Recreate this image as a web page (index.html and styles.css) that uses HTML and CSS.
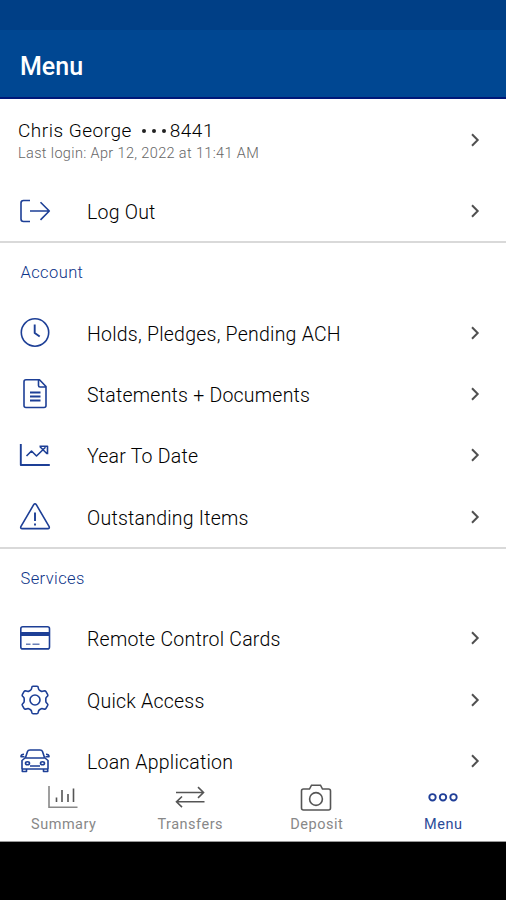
FILE: index.html
```
<!DOCTYPE html>
<html lang="en">
<head>
<meta charset="utf-8">
<title>Menu</title>
<link rel="stylesheet" href="styles.css">
</head>
<body>
<svg class="defs" width="0" height="0"><defs><symbol id="chev" viewBox="0 0 12 16"><path d="M2 2.300 7.700 8 2 13.700"/></symbol></defs></svg>
<div class="screen">
  <div class="status"></div>
  <header class="appbar"><h1>Menu</h1></header>
  <main class="content">
    <div class="profile">
      <div class="who">
        <div class="name"><span>Chris George</span><i class="dots"><b></b><b></b><b></b></i><span>8441</span></div>
        <div class="login"><span>Last login: Apr 12, 2022 at 11:41 AM</span></div>
      </div>
      <svg class="chev"><use href="#chev"/></svg>
    </div>
    <div class="row">
      <svg class="icon" viewBox="0 0 34 34"><path d="M12 6.500H5.500Q3 6.500 3 9V25Q3 27.500 5.500 27.500H12"/><path d="M12 17H31M22.500 8.200 31.300 17 22.500 25.900"/></svg>
      <span class="label">Log Out</span><svg class="chev"><use href="#chev"/></svg>
    </div>
    <section>
      <h2>Account</h2>
      <div class="row">
        <svg class="icon" viewBox="0 0 34 34"><circle cx="17" cy="16.500" r="13.700"/><path class="bold" d="M16.700 8.500V17l5 3.500"/></svg>
        <span class="label">Holds, Pledges, Pending ACH</span><svg class="chev"><use href="#chev"/></svg>
      </div>
      <div class="row">
        <svg class="icon" viewBox="0 0 34 34"><path d="M8 2.700H21.500L28 9.500V28.500Q28 30.500 26 30.500H8Q6 30.500 6 28.500V4.700Q6 2.700 8 2.700ZM20.500 3V8.500Q20.500 10 22 10H27.700"/><path class="bold" d="M12 15.500H22.500M12 19.500H22.500M12 23.500H22.500"/></svg>
        <span class="label">Statements + Documents</span><svg class="chev"><use href="#chev"/></svg>
      </div>
      <div class="row">
        <svg class="icon" viewBox="0 0 34 34"><path class="bold" d="M2.800 6V27H31.800"/><path d="M8.500 18 13.500 13 18.500 18 27.500 9.200M21.500 8.300H29.500V16.200M22 8.800 29 15.800"/></svg>
        <span class="label">Year To Date</span><svg class="chev"><use href="#chev"/></svg>
      </div>
      <div class="row">
        <svg class="icon" viewBox="0 0 34 34"><path d="M15.700 4.700Q17 2.700 18.300 4.700L31 26.300Q32 28.600 29.700 28.600H4.300Q2 28.600 3 26.300Z"/><path class="bold" d="M17 12.500V21M17 23.500V25.500"/></svg>
        <span class="label">Outstanding Items</span><svg class="chev"><use href="#chev"/></svg>
      </div>
    </section>
    <section>
      <h2>Services</h2>
      <div class="row">
        <svg class="icon" viewBox="0 0 34 34"><rect x="2.800" y="5.700" width="28.700" height="22.200" rx="2"/><path class="stripe" d="M3 13H31.500"/><path class="fine" d="M8 23.300H12.500M14.500 23.300H21.500"/></svg>
        <span class="label">Remote Control Cards</span><svg class="chev"><use href="#chev"/></svg>
      </div>
      <div class="row">
        <svg class="icon" viewBox="-17 -17 34 34"><path d="M-2-13.700H2Q3.200-13.700 3.300-12 3.500-10.300 4.500-9.700L6.200-8.800Q7-8.300 8.700-9 10.300-9.500 11-8.300L12.700-5.400Q13.300-4.300 12-3.300 10.800-2.400 10.800-1.300V1.300Q10.800 2.400 12 3.300 13.300 4.300 12.700 5.400L11 8.300Q10.300 9.500 8.700 9 7 8.300 6.200 8.800L4.500 9.700Q3.500 10.300 3.300 12 3.200 13.700 2 13.700H-2Q-3.200 13.700-3.300 12-3.500 10.300-4.500 9.700L-6.200 8.800Q-7 8.300-8.700 9-10.300 9.500-11 8.300L-12.700 5.400Q-13.300 4.300-12 3.300-10.800 2.400-10.800 1.300V-1.300Q-10.800-2.400-12-3.300-13.300-4.300-12.700-5.400L-11-8.300Q-10.300-9.500-8.700-9-7-8.300-6.200-8.800L-4.500-9.700Q-3.500-10.300-3.300-12-3.200-13.700-2-13.700Z"/><circle r="5"/></svg>
        <span class="label">Quick Access</span><svg class="chev"><use href="#chev"/></svg>
      </div>
      <div class="row">
        <svg class="icon" viewBox="0 0 34 34"><path d="M7.500 13.500 9.500 7.500Q10 6 12 6H22Q24 6 24.500 7.500L26.500 13.500M7 14H27L30 16.500V25H4V16.500ZM6.500 12.700H3Q3 10.300 6 10.300M27.500 12.700H31Q31 10.300 28 10.300M4.300 25V27.500H8.500V25M25.500 25V27.500H29.700V25M12 22H22"/><ellipse cx="9.500" cy="19.200" rx="2" ry="1.500"/><ellipse cx="24.500" cy="19.200" rx="2" ry="1.500"/></svg>
        <span class="label">Loan Application</span><svg class="chev"><use href="#chev"/></svg>
      </div>
    </section>
  </main>
  <nav class="tabs">
    <a><svg class="tabicon" viewBox="0 0 34 30"><path d="M3 2V23.300H31.500" class="axis"/><path d="M10.500 13.500V18M16 6V18M22 10V18M27.500 4.500V18"/></svg><span>Summary</span></a>
    <a><svg class="tabicon" viewBox="0 0 34 30"><path d="M3 8.500H30M25 3.200 30.500 8.500 25 13.800M31.500 17.800H4M9 12.500 3.500 17.800 9 23.100"/></svg><span>Transfers</span></a>
    <a><svg class="tabicon" viewBox="0 0 34 30"><path d="M4.500 5H10.500L12.500 1.200H21.500L23.500 5H29.500Q31.500 5 31.500 7V24Q31.500 26 29.500 26H4.500Q2.500 26 2.500 24V7Q2.500 5 4.500 5Z"/><circle cx="17" cy="15" r="6.400"/></svg><span>Deposit</span></a>
    <a class="active"><svg class="tabicon" viewBox="0 0 34 30"><circle cx="6.500" cy="13.300" r="3.200"/><circle cx="17" cy="13.300" r="3.200"/><circle cx="27.500" cy="13.300" r="3.200"/></svg><span>Menu</span></a>
  </nav>
  <div class="system"></div>
</div>
</body>
</html>
```
FILE: styles.css
```
* { box-sizing: border-box; }
body { margin: 0; font-family: Roboto, "Liberation Sans", sans-serif; background: #fff; }
h1, h2 { margin: 0; }
.defs { display: block; }
.screen { height: 900px; display: flex; flex-direction: column; overflow: hidden; }
.status { height: 30px; flex: none; background: #003f86; }
.appbar { height: 69px; flex: none; background: #004792; border-bottom: 2px solid #001878; padding: 0 20px; display: flex; align-items: center; }
.appbar h1 { font-size: 25px; font-weight: 500; line-height: 30px; color: #fff; padding-top: 6px; }
.content { flex: 1; min-height: 0; overflow: hidden; }
.profile { height: 81px; padding: 0 24px 0 18px; display: flex; justify-content: space-between; align-items: center; }
.who { padding-top: 4px; }
.name { display: flex; align-items: center; font-size: 19px; font-weight: 300; line-height: 24px; letter-spacing: .5px; color: #000; }
.dots { display: flex; gap: 6px; margin: 0 4px 0 10px; }
.dots b { width: 4px; height: 4px; border-radius: 50%; background: #222; }
.login { font-size: 14.500px; font-weight: 300; line-height: 22px; color: #666; letter-spacing: .36px; }
.row { height: 61.400px; padding: 0 24px 0 18px; display: flex; align-items: center; }
.icon { width: 34px; height: 34px; flex: none; margin-right: 35px; fill: none; stroke: #1d3f96; stroke-width: 1.600; stroke-linejoin: round; }
.icon .bold { stroke-width: 1.900; }
.icon .stripe { stroke-width: 4; }
.icon .fine { stroke-width: 1.500; stroke: #6980b8; }
.label { flex: 1; padding-top: 4px; font-size: 19.500px; font-weight: 300; line-height: 26px; letter-spacing: .23px; color: #000; }
.chev { width: 12px; height: 16px; fill: none; stroke: #505050; stroke-width: 2; flex: none; }
section { border-top: 2px solid #d9d9d9; height: 305.800px; }
h2 { height: 58.500px; padding: 1px 20.500px 0; font-size: 16.500px; line-height: 58px; font-weight: 300; letter-spacing: .4px; color: #0d3488; }
.tabs { height: 60px; flex: none; display: grid; grid-template-columns: repeat(4, 1fr); background: #fff; border-bottom: 1px solid #999; }
.tabs a { display: flex; flex-direction: column; align-items: center; font-size: 14.500px; line-height: 20px; letter-spacing: .5px; color: #888; }
.tabs span { padding-left: 1px; }
.tabicon { width: 34px; height: 30px; margin: 2px 0 1px; fill: none; stroke: #555; stroke-width: 1.600; }
.tabicon .axis { stroke: #888; }
.tabs .active { color: #2b4b98; }
.active .tabicon { stroke: #203f98; stroke-width: 1.900; }
.system { height: 58px; flex: none; background: #000; }
```
